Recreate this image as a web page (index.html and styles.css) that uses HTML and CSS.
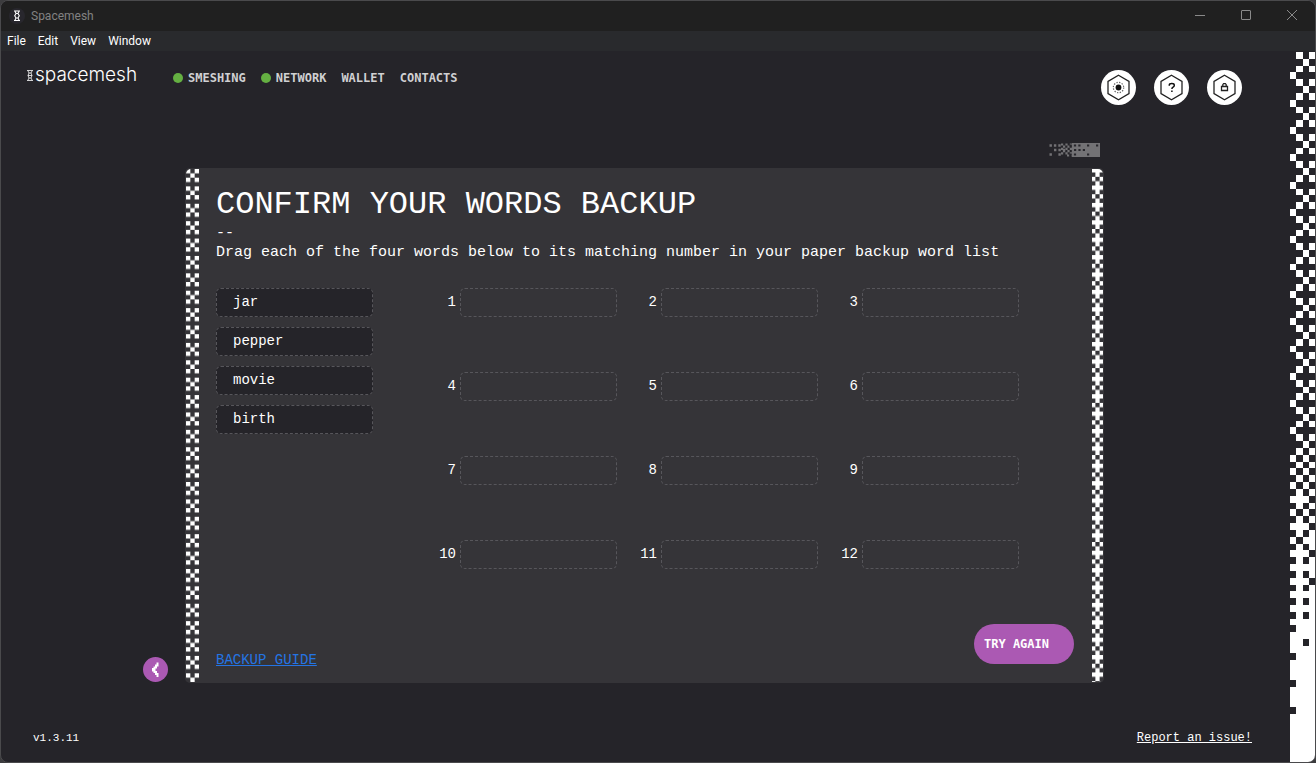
FILE: index.html
```html
<!DOCTYPE html>
<html lang="en">
<head>
<meta charset="utf-8">
<title>Spacemesh</title>
<link rel="stylesheet" href="styles.css">
</head>
<body>
<div class="window">
  <header class="titlebar">
    <svg class="app-icon" viewBox="0 0 16 16" aria-hidden="true">
      <circle cx="8" cy="8" r="8" fill="#28272d"/>
      <path d="M5 3h6M5 12.500h6M6 3.500l1.200 2h1.600l1.200-2M7 5.500L5.700 7.800 7 10h2l1.300-2.200L9 5.500M7 10l-1 2M9 10l1 2" fill="none" stroke="#fff" stroke-width="1.100"/>
    </svg>
    <span class="titlebar-name">Spacemesh</span>
    <div class="window-controls">
      <button type="button" aria-label="Minimize"><svg viewBox="0 0 12 12"><path d="M1 5.500h10"/></svg></button>
      <button type="button" aria-label="Maximize"><svg viewBox="0 0 12 12"><rect x="1.500" y=".5" width="9" height="9" rx=".5"/></svg></button>
      <button type="button" aria-label="Close"><svg viewBox="0 0 12 12"><path d="M1 0l10 10M11 0L1 10"/></svg></button>
    </div>
  </header>
  <nav class="menubar" aria-label="Application menu">
    <button type="button">File</button>
    <button type="button">Edit</button>
    <button type="button">View</button>
    <button type="button">Window</button>
  </nav>

  <div class="app">
    <div class="content">
      <header class="topbar">
        <a class="logo" href="#">
          <svg viewBox="0 0 6 11" aria-hidden="true"><path d="M0 .5h6M0 10.500h6M1 1l1 2h2l1-2M2 3L1 5.500h4L4 3M1 5.500L2 8h2l1-2.500M2 8l-1 2M4 8l1 2" fill="none" stroke="#fff" stroke-width=".8"/></svg>
          <span>spacemesh</span>
        </a>
        <nav class="tabs" aria-label="Main">
          <a href="#"><i class="status"></i>SMESHING</a>
          <a href="#"><i class="status"></i>NETWORK</a>
          <a href="#">WALLET</a>
          <a href="#">CONTACTS</a>
        </nav>
        <div class="actions">
          <button type="button" aria-label="Settings">
            <svg viewBox="0 0 35 35"><path class="hex" d="M17.500 5.300L28 11.400v12.200l-10.500 6.100L7 23.600V11.400z"/><circle cx="17.500" cy="17.500" r="2.900" fill="#111"/><circle cx="17.500" cy="17.500" r="5.200" fill="none" stroke="#666" stroke-width="1.200" stroke-dasharray="1.300 1.420"/></svg>
          </button>
          <button type="button" aria-label="Help">
            <svg viewBox="0 0 35 35"><path class="hex" d="M17.500 5.300L28 11.400v12.200l-10.500 6.100L7 23.600V11.400z"/><path d="M15.300 15.700v-.7q0-1.500 2.500-1.500t2.500 1.700q0 1.200-1.200 1.900-1.200.7-1.200 2M17.900 20.500v1.500" fill="none" stroke="#111" stroke-width="1.500"/></svg>
          </button>
          <button type="button" aria-label="Lock">
            <svg viewBox="0 0 35 35"><path class="hex" d="M17.500 5.300L28 11.400v12.200l-10.500 6.100L7 23.600V11.400z"/><path d="M14.500 16.500h6v4h-6zM15.800 16v-1.300l.8-1h1.800l.8 1V16" fill="none" stroke="#222" stroke-width="1.300"/></svg>
          </button>
        </div>
      </header>

      <div class="progress">
        <svg viewBox="0 0 51 15" role="img" aria-label="Progress">
          <path d="M23 0H51V14H23z" fill="#737275"/>
          <g fill="none" stroke="#737275" stroke-width="2.400">
            <path d="M.5 2.500h12M5 7h12M.5 11.500h2.400M9.400 11.500h4" stroke-dasharray="2.400 2"/>
            <path d="M12 1.500h12M14 3.700h10M12 5.900h12M14 8.100h10M12 10.300h12M18 12.500h6" stroke-width="2.200" stroke-dasharray="2.200 2.200"/>
          </g>
          <path d="M20.500 2.500h12M25 7h12M20.500 11.500h7M38 2.500h2.400M47 2.500h2.400M38 11.500h2.400" stroke="#28272c" stroke-width="2.200" stroke-dasharray="2.200 2.200" fill="none"/>
        </svg>
      </div>

      <div class="stage">
        <button type="button" class="back" aria-label="Back">
          <svg viewBox="0 0 25 25"><path d="M14.500 5.500v3H13v2h-1.500v1.500H10v1.500h1.500V15H13v2h1.500v3" fill="none" stroke="#fff" stroke-width="2"/></svg>
        </button>
        <main class="card">
          <svg class="edge edge-left" viewBox="0 0 3 118" preserveAspectRatio="none" aria-hidden="true">
            <defs><pattern id="cross" width="3" height="4" patternUnits="userSpaceOnUse"><path d="M0 0h1v1h1V0h1v1H2v1h1v1H2V2H1v1H0V2h1V1H0z" fill="#fff"/></pattern></defs>
            <rect width="3" height="118" fill="url(#cross)"/>
          </svg>
          <div class="panel">
            <h1>CONFIRM YOUR WORDS BACKUP</h1>
            <div class="rule">--</div>
            <p class="lead">Drag each of the four words below to its matching number in your paper backup word list</p>
            <div class="board">
              <ul class="words">
                <li draggable="true">jar</li>
                <li draggable="true">pepper</li>
                <li draggable="true">movie</li>
                <li draggable="true">birth</li>
              </ul>
              <ol class="slots">
                <li><span>1</span><div class="slot"></div></li>
                <li><span>2</span><div class="slot"></div></li>
                <li><span>3</span><div class="slot"></div></li>
                <li><span>4</span><div class="slot"></div></li>
                <li><span>5</span><div class="slot"></div></li>
                <li><span>6</span><div class="slot"></div></li>
                <li><span>7</span><div class="slot"></div></li>
                <li><span>8</span><div class="slot"></div></li>
                <li><span>9</span><div class="slot"></div></li>
                <li><span>10</span><div class="slot"></div></li>
                <li><span>11</span><div class="slot"></div></li>
                <li><span>12</span><div class="slot"></div></li>
              </ol>
            </div>
            <div class="panel-footer">
              <a class="guide" href="#">BACKUP GUIDE</a>
              <button type="button" class="retry">TRY AGAIN</button>
            </div>
          </div>
          <svg class="edge edge-right" viewBox="0 0 26 1180" preserveAspectRatio="none" aria-hidden="true">
            <defs><pattern id="weave" y="-2" width="26" height="40" patternUnits="userSpaceOnUse"><path d="M0 0h26v10H18v10h8v10H18v10H8V30H0V20h8V10H0zM8 20v10h10V20z" fill="#fff" fill-rule="evenodd"/></pattern></defs>
            <rect width="26" height="1180" fill="url(#weave)"/>
          </svg>
        </main>
      </div>

      <footer class="footer">
        <span class="version">v1.3.11</span>
        <a href="#">Report an issue!</a>
      </footer>
    </div>

    <svg class="strip" viewBox="0 0 4 104" preserveAspectRatio="none" aria-hidden="true">
      <g fill="none" stroke="#fff" shape-rendering="crispEdges">
        <path d="M.5 3V56" stroke-dasharray="1 3"/>
        <path d="M.5 59V84" stroke-dasharray="1 1"/>
        <path d="M.5 85v3m0 1v3m0 1v3m0 1v7"/>
        <path d="M1.500 0V64M3.500 0V71" stroke-dasharray="1 1"/>
        <path d="M1.500 64v3m0 1v3m0 1v32"/>
        <path d="M2.500 1V58" stroke-dasharray="1 3"/>
        <path d="M2.500 59V84" stroke-dasharray="1 1"/>
        <path d="M2.500 84v2m0 1v17"/>
        <path d="M3.500 71v2m0 1v3m0 1v26"/>
      </g>
    </svg>
  </div>
</div>
</body>
</html>
```
FILE: styles.css
```css
* { box-sizing: border-box; }

body {
  margin: 0;
  background: #3c3c3e;
  color: #fff;
  font-family: "Liberation Mono", monospace;
  font-size: 14px;
}

button {
  border: 0;
  padding: 0;
  background: none;
  color: inherit;
  font: inherit;
  cursor: pointer;
}

a { color: inherit; }
svg { display: block; }

.window {
  display: flex;
  flex-direction: column;
  min-height: 100vh;
  border: 1px solid #4a4a4c;
  border-radius: 8px;
  overflow: hidden;
  background: #252429;
}

.titlebar,
.menubar { font-family: Roboto, "Open Sans", sans-serif; font-size: 12px; }

.titlebar {
  display: flex;
  align-items: center;
  height: 30px;
  padding-left: 8px;
  background: #202020;
  color: #828282;
}
.app-icon { width: 16px; height: 16px; margin-right: 6px; }
.window-controls { display: flex; margin-left: auto; }
.window-controls button { display: grid; place-items: center; width: 46px; height: 30px; }
.window-controls svg { width: 12px; height: 12px; fill: none; stroke: #8a8a8a; }

.menubar {
  display: flex;
  gap: 12px;
  height: 20px;
  padding-left: 6px;
  background: #292a2d;
  line-height: 20px;
}

.app { display: flex; flex: 1; }
.content { display: flex; flex: 1; flex-direction: column; min-width: 0; }
.strip { flex: none; width: 25px; height: auto; min-height: 0; margin-top: 1px; }

.topbar {
  display: flex;
  align-items: flex-start;
  padding: 14px 48px 0 26px;
}
.logo {
  display: flex;
  align-items: center;
  gap: 2px;
  width: 146px;
  font: 300 19px/20px Inter, sans-serif;
  text-decoration: none;
}
.logo svg { width: 6px; height: 11px; }
.tabs,
.retry {
  font-family: "DejaVu Sans Mono", "Liberation Mono", monospace;
  font-size: 12px;
  font-weight: 700;
}
.tabs {
  display: flex;
  gap: 15px;
  padding-top: 5px;
  color: #d0d0d2;
  line-height: 16px;
}
.tabs a { display: flex; align-items: center; gap: 5px; text-decoration: none; }
.status { width: 10px; height: 10px; border-radius: 50%; background: #65b042; }
.actions { display: flex; gap: 18px; margin: 5px 0 0 auto; }
.actions button { width: 35px; height: 35px; border-radius: 50%; background: #fff; }
.hex { fill: none; stroke: #222; stroke-width: 1.3; }

.progress { display: flex; justify-content: flex-end; padding: 38px 190px 10px 0; }
.progress svg { width: 51px; height: 15px; }

.stage {
  display: flex;
  flex: 1;
  align-items: flex-end;
  gap: 17px;
  padding: 0 186px 0 142px;
}
.back { flex: none; width: 25px; height: 25px; margin-bottom: 1px; border-radius: 50%; background: #ab59b3; }

.card {
  display: flex;
  flex: 1;
  align-self: stretch;
  min-width: 0;
  padding: 1px;
  border-radius: 5px;
  background: #353438;
}
.edge { flex: none; height: auto; min-height: 0; }
.edge-left { width: 13px; border-radius: 5px 0 0 5px; }
.edge-right { width: 11px; border-radius: 0 5px 5px 0; }

.panel { display: flex; flex: 1; flex-direction: column; padding: 16px 18px 18px 17px; }
h1 { margin: 0; font-size: 32px; font-weight: 400; line-height: 40px; }
.rule { font-size: 15px; line-height: 18px; }
.lead { margin: 0; font-size: 15px; line-height: 20px; }

.board { display: flex; gap: 61px; margin-top: 25px; }
.words,
.slots { margin: 0; padding: 0; list-style: none; }
.words { display: flex; flex-direction: column; gap: 10px; }
.words li,
.slot { width: 157px; height: 29px; border: 1px dashed #57565b; border-radius: 5px; }
.words li { padding-left: 16px; background: #252429; line-height: 26px; cursor: grab; }
.slots { display: grid; grid-template-columns: repeat(3, auto); gap: 55px 18px; align-content: start; }
.slots li { display: flex; gap: 4px; line-height: 28px; }
.slots span { width: 22px; text-align: right; }

.panel-footer { display: flex; align-items: flex-end; justify-content: space-between; margin-top: auto; }
.guide { color: #2474e4; line-height: 8px; }
.retry {
  width: 100px;
  height: 40px;
  padding-left: 10px;
  border-radius: 20px;
  background: #ab59b3;
  text-align: left;
}

.footer {
  display: flex;
  justify-content: space-between;
  padding: 47px 38px 16px 32px;
  font-size: 12px;
  line-height: 16px;
}
.version { font-size: 11px; }
```
